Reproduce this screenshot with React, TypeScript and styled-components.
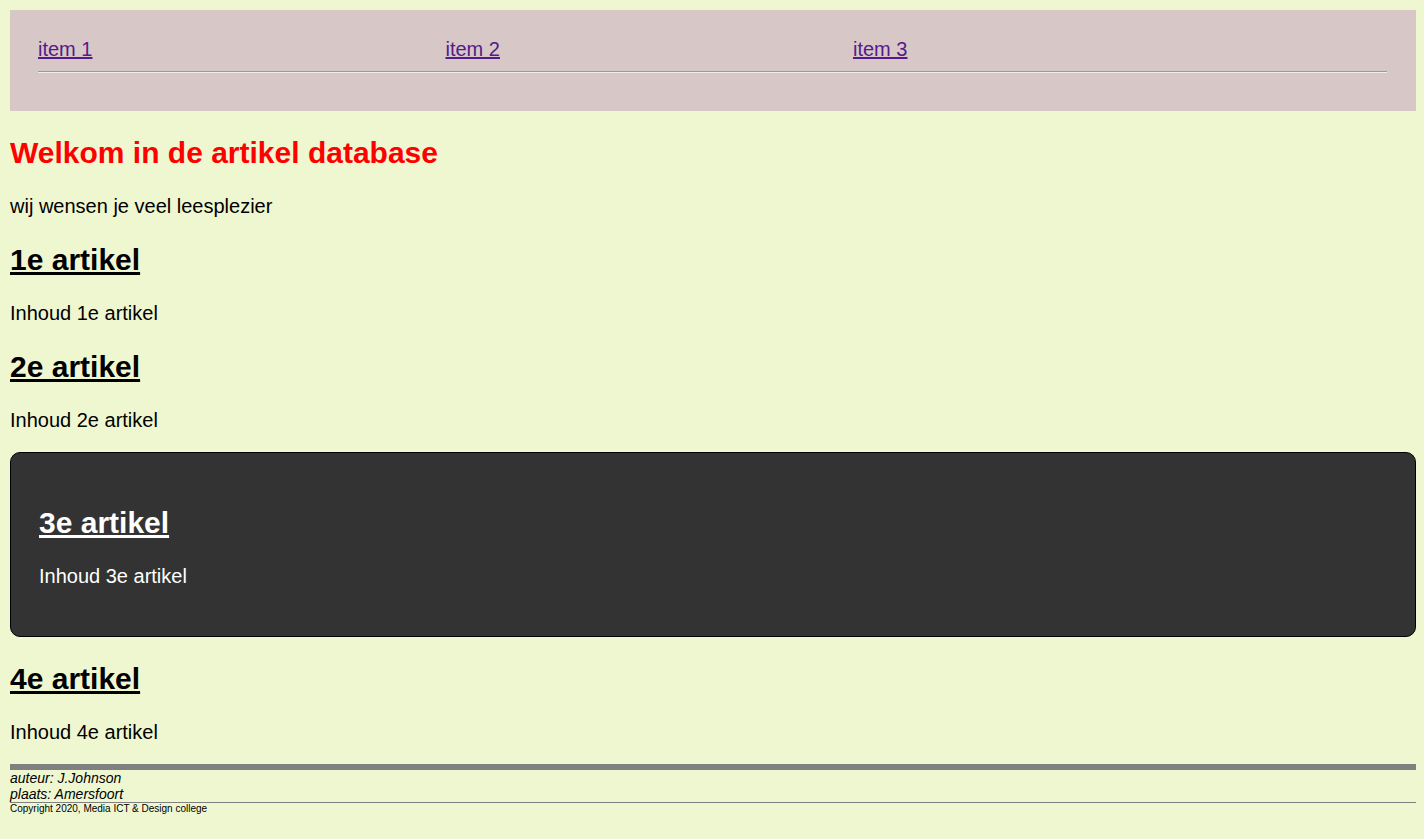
import React from 'react';
import styled, { createGlobalStyle } from 'styled-components';

const GlobalStyle = createGlobalStyle`
  body {
    margin: 0;
    padding: 10px 8px 10px 10px;
    background-color: #eff7d1;
    font-family: "Liberation Sans", Arial, sans-serif;
    font-size: 20px;
    color: #000;
  }
`;

const articles = [
  { id: 1, title: '1e artikel', body: 'Inhoud 1e artikel' },
  { id: 2, title: '2e artikel', body: 'Inhoud 2e artikel' },
  { id: 3, title: '3e artikel', body: 'Inhoud 3e artikel', dark: true },
  { id: 4, title: '4e artikel', body: 'Inhoud 4e artikel' },
];

function App() {
  return (
    <>
      <GlobalStyle />
      <S.Nav>
        <S.Menu>
          <li><S.MenuLink href="#item1">item 1</S.MenuLink></li>
          <li><S.MenuLink href="#item2">item 2</S.MenuLink></li>
          <li><S.MenuLink href="#item3">item 3</S.MenuLink></li>
        </S.Menu>
        <S.NavRule />
      </S.Nav>

      <S.Main>
        <S.Title>Welkom in de artikel database</S.Title>
        <S.Text>wij wensen je veel leesplezier</S.Text>

        {articles.map((article) => (
          <S.Article key={article.id} $dark={article.dark}>
            <S.ArticleTitle>{article.title}</S.ArticleTitle>
            <S.Text>{article.body}</S.Text>
          </S.Article>
        ))}
      </S.Main>

      <S.Footer>
        <S.Address>
          auteur: J.Johnson
          <br />
          plaats: Amersfoort
        </S.Address>
        <S.Copyright>Copyright 2020, Media ICT &amp; Design college</S.Copyright>
      </S.Footer>
    </>
  );
}

const S = {
  Nav: styled.nav`
    background-color: #d7c7c7;
    padding: 28px 29px 38px 28px;
  `,

  Menu: styled.ul`
    display: grid;
    grid-template-columns: repeat(3, 407.5px);
    list-style: none;
    margin: 0;
    padding: 0;
    line-height: 23px;
  `,

  MenuLink: styled.a`
    color: #551a8b;
    text-decoration: underline;
  `,

  NavRule: styled.hr`
    margin: 10px 0 0;
    border: none;
    border-top: 1px solid #9a9a9a;
    border-bottom: 1px solid #eeeeee;
    height: 0;
  `,

  Main: styled.main`
    display: block;
  `,

  Title: styled.h1`
    color: #ff0000;
    font-size: 30px;
    font-weight: 700;
    margin: 25px 0;
  `,

  Text: styled.p`
    margin: 20px 0;
    line-height: 23px;
  `,

  Article: styled.section<{ $dark?: boolean }>`
    ${({ $dark }) =>
      $dark
        ? `
      background-color: #333333;
      color: #ffffff;
      border: 1px solid #000;
      border-radius: 10px;
      padding: 28px;
      margin: 20px 0 0;
    `
        : ''}
  `,

  ArticleTitle: styled.h2`
    font-size: 30px;
    font-weight: 700;
    text-decoration: underline;
    margin: 25px 0;
  `,

  Footer: styled.footer`
    margin-top: 20px;
    border-top: 6px solid #808080;
  `,

  Address: styled.address`
    font-size: 14px;
    line-height: 16px;
    font-style: italic;
    border-bottom: 1px solid #808080;
  `,

  Copyright: styled.div`
    font-size: 10px;
    line-height: 11px;
  `,
};

export default App;
